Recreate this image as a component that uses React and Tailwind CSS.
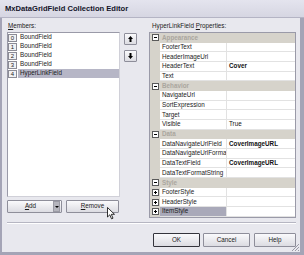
import React from 'react';

const font = { fontFamily: '"Liberation Sans", Arial, sans-serif' };

const members = ['BoundField', 'BoundField', 'BoundField', 'BoundField', 'HyperLinkField'];

const rows = [
  { cat: 'Appearance' },
  { name: 'FooterText' },
  { name: 'HeaderImageUrl' },
  { name: 'HeaderText', value: 'Cover', bold: true },
  { name: 'Text' },
  { cat: 'Behavior' },
  { name: 'NavigateUrl' },
  { name: 'SortExpression' },
  { name: 'Target' },
  { name: 'Visible', value: 'True' },
  { cat: 'Data' },
  { name: 'DataNavigateUrlField', value: 'CoverImageURL', bold: true },
  { name: 'DataNavigateUrlFormatString' },
  { name: 'DataTextField', value: 'CoverImageURL', bold: true },
  { name: 'DataTextFormatString' },
  { cat: 'Style' },
  { name: 'FooterStyle', plus: true },
  { name: 'HeaderStyle', plus: true },
  { name: 'ItemStyle', plus: true, selected: true },
];

function Box({ plus }) {
  return (
    <svg width="7" height="7" viewBox="0 0 7 7" className="block">
      <rect x="0.5" y="0.5" width="6" height="6" fill="#fff" stroke="#5a5a5a" />
      <path d="M2 3.5H5" stroke="#000" />
      {plus && <path d="M3.5 2V5" stroke="#000" />}
    </svg>
  );
}

function Arrow({ down }) {
  return (
    <svg width="5" height="6" viewBox="0 0 5 6" className={down ? 'rotate-180' : ''}>
      <path d="M2.5 0L5 3H3.5V6H1.5V3H0Z" fill="#000" />
    </svg>
  );
}

function Btn({ children, className = '' }) {
  return (
    <div className={`flex items-center justify-center border border-[#8e8e9a] rounded-[1px] bg-gradient-to-b from-[#fafafc] to-[#dcdce2] text-[6.3px] text-[#1a1a1a] ${className}`}>
      {children}
    </div>
  );
}

export default function App() {
  return (
    <div className="w-[304px] h-[255px] flex flex-col bg-[#a4a4b6] overflow-hidden relative leading-none" style={font}>
      {/* Title bar */}
      <div className="h-[18px] shrink-0 flex items-center pl-[5px] pt-[1px] bg-gradient-to-b from-[#e4e4ee] to-[#d6d6e2] border-b border-[#b4b4c4]">
        <span className="text-[7.6px] font-bold text-[#14142a]">MxDataGridField Collection Editor</span>
      </div>

      {/* Body */}
      <div className="flex-1 flex flex-col ml-[2px] mr-[4px] mb-[3px] bg-[#e8e8ee]">
        <div className="flex pl-[5px] pt-[3px]">
          {/* Members */}
          <div className="w-[113px] flex flex-col">
            <div className="h-[11px] flex items-center pl-[1px] text-[6.3px] text-[#1a1a1a]">
              <span><u>M</u>embers:</span>
            </div>
            <div className="h-[165px] bg-white border border-[#9a9aa8] border-r-[#d0d0d8] border-b-[#d0d0d8] flex flex-col">
              {members.map((m, i) => (
                <div key={i} className="h-[9px] flex items-center">
                  <div className="w-[9px] h-[8px] flex items-center justify-center border border-[#8c8c96] bg-[#f2f2f4] text-[6px] text-[#222]">
                    {i}
                  </div>
                  <div className={`flex-1 h-[9px] ml-[1px] flex items-center pl-[2px] text-[6.3px] text-[#1a1a1a] ${i === 4 ? 'bg-[#b6b6c6]' : ''}`}>
                    {m}
                  </div>
                </div>
              ))}
            </div>
            <div className="flex mt-[3px] h-[13px] gap-[4px]">
              <Btn className="w-[55px]">
                <span className="flex-1 text-center"><u>A</u>dd</span>
                <div className="w-[7px] h-[11px] mr-[1px] bg-[#b4b4bc] border border-[#9a9aa4] flex items-center justify-center">
                  <svg width="4" height="2" viewBox="0 0 4 2"><path d="M0 0H4L2 2Z" fill="#000" /></svg>
                </div>
              </Btn>
              <Btn className="w-[53px]">
                <span><u>R</u>emove</span>
              </Btn>
            </div>
          </div>

          {/* Up / down */}
          <div className="ml-[4px] w-[13px] pt-[12px] flex flex-col gap-[5px]">
            <Btn className="h-[12px]"><Arrow /></Btn>
            <Btn className="h-[12px]"><Arrow down /></Btn>
          </div>

          {/* Properties */}
          <div className="ml-[12px] w-[147px] flex flex-col">
            <div className="h-[11px] flex items-center pl-[3px] text-[6.3px] text-[#1a1a1a]">
              <span>HyperLinkField <u>P</u>roperties:</span>
            </div>
            <div className="h-[186px] border border-[#9a9aa8] bg-white flex flex-col">
              {rows.map((r, i) =>
                r.cat ? (
                  <div key={i} className="h-[9.68px] min-h-0 flex items-center bg-[#d6d3cb]">
                    <div className="w-[10px] flex justify-center"><Box /></div>
                    <span className="pl-[2px] text-[6.3px] font-bold text-[#aaa69e]">{r.cat}</span>
                  </div>
                ) : (
                  <div key={i} className="h-[9.68px] min-h-0 flex">
                    <div className="w-[10px] bg-[#d6d3cb] flex items-center justify-center">
                      {r.plus && <Box plus />}
                    </div>
                    <div className={`w-[67px] flex items-center pl-[2px] border-b border-r border-[#e2e2e2] overflow-hidden whitespace-nowrap text-[6.3px] text-[#1a1a1a] ${r.selected ? 'bg-[#a9a9b9]' : ''}`}>
                      {r.name}
                    </div>
                    <div className={`flex-1 flex items-center pl-[2px] border-b border-[#e2e2e2] text-[6.3px] text-[#111] ${r.bold ? 'font-bold' : ''}`}>
                      {r.value}
                    </div>
                  </div>
                )
              )}
            </div>
          </div>
        </div>

        {/* Separator */}
        <div className="mt-[4px] ml-[5px] w-[289px] h-[2px] border-t border-[#b6b6c2] border-b border-b-white" />

        {/* Dialog buttons */}
        <div className="mt-[9px] flex justify-end pr-[4px] gap-[3px]">
          <Btn className="w-[47px] h-[14px] border-[#34343c]">OK</Btn>
          <Btn className="w-[47px] h-[14px]">Cancel</Btn>
          <Btn className="w-[42px] h-[14px] ml-[1px]">Help</Btn>
        </div>
      </div>

      {/* Size grip */}
      <svg width="9" height="9" viewBox="0 0 9 9" className="absolute left-[291px] top-[243px]">
        <path d="M8 1L1 8M8 4L4 8M8 7L7 8" stroke="#9a9aa6" strokeWidth="1" />
      </svg>

      {/* Mouse cursor */}
      <svg width="9" height="13" viewBox="0 0 9 13" className="absolute left-[107px] top-[207px]">
        <path d="M0.5 0.5V10L2.8 7.8L4.5 11.8L6 11.2L4.3 7.3H7.5Z" fill="#fff" stroke="#000" strokeWidth="0.8" strokeLinejoin="round" />
      </svg>
    </div>
  );
}
